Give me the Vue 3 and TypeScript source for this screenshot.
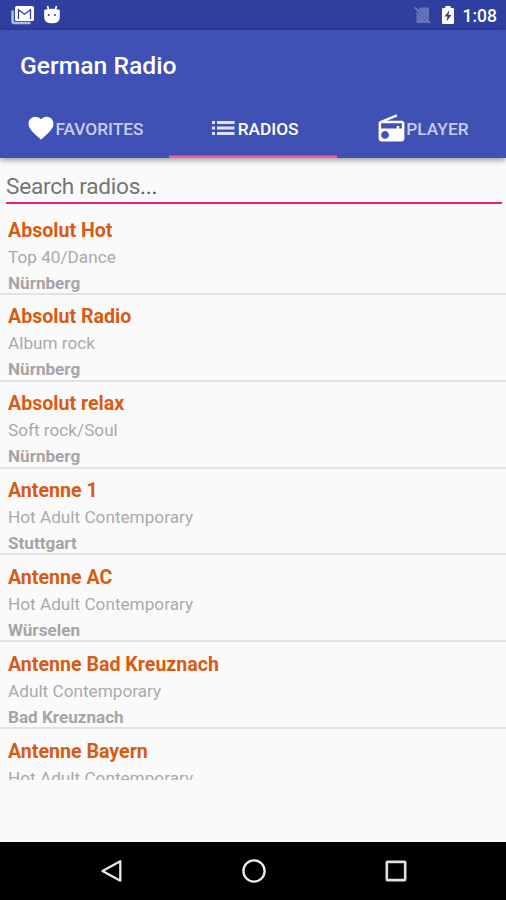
<script setup lang="ts">
interface Station {
  name: string
  genre: string
  city?: string
}

const stations: Station[] = [
  { name: 'Absolut Hot', genre: 'Top 40/Dance', city: 'Nürnberg' },
  { name: 'Absolut Radio', genre: 'Album rock', city: 'Nürnberg' },
  { name: 'Absolut relax', genre: 'Soft rock/Soul', city: 'Nürnberg' },
  { name: 'Antenne 1', genre: 'Hot Adult Contemporary', city: 'Stuttgart' },
  { name: 'Antenne AC', genre: 'Hot Adult Contemporary', city: 'Würselen' },
  { name: 'Antenne Bad Kreuznach', genre: 'Adult Contemporary', city: 'Bad Kreuznach' },
  { name: 'Antenne Bayern', genre: 'Hot Adult Contemporary' },
]
</script>

<template>
  <div class="screen">
    <div class="status">
      <svg class="mail" width="24" height="20" viewBox="0 0 24 20">
        <path d="M1.600 5.500v11q0 1.500 1.500 1.500H19.500" fill="none" stroke="#b4bae0" stroke-width="2.600" />
        <rect x="4" y="1" width="19" height="15" rx="1.500" fill="#fff" />
        <path d="M7.500 14V4.800l6 4.400 6-4.400V14" fill="none" stroke="#303f9f" stroke-width="1.300" />
      </svg>
      <svg class="droid" width="18" height="20" viewBox="0 0 18 20">
        <path d="M4.500 1l1.300 4M13.500 1l-1.300 4" stroke="#fff" stroke-width="1.600" />
        <path d="M1.200 5Q9 2.500 16.800 5V12q0 6.300-7.800 6.300T1.200 12Z" fill="#fff" />
        <circle cx="5.700" cy="10" r="1" fill="#303f9f" />
        <circle cx="12" cy="10" r="1" fill="#303f9f" />
      </svg>
      <span class="grow"></span>
      <svg class="nosim" width="18" height="18" viewBox="0 0 18 18">
        <path d="M6 1.500h9V17H2.500V5Z" fill="#6672b9" />
        <path d="M0 .8L16.500 17.300" stroke="#303f9f" stroke-width="2.600" />
        <path d="M.8 1.500L16 17" stroke="#8088c4" stroke-width="1.500" />
      </svg>
      <svg class="battery" width="14" height="20" viewBox="0 0 14 20">
        <path d="M4.300 1h5.400v2H12q1 0 1 1v14q0 1-1 1H2q-1 0-1-1V4q0-1 1-1h2.300Z" fill="#fff" />
        <path d="M8.500 5L3.500 11.500h3L5.500 16.500L10.500 10h-3Z" fill="#303f9f" />
      </svg>
      <span class="clock">1:08</span>
    </div>
    <header class="appbar">
      <h1>German Radio</h1>
      <nav class="tabs">
        <div class="tab fav">
          <svg width="30" height="30" viewBox="0 0 24 24"><path fill="#fff" d="M12 21.350l-1.450-1.320C5.400 15.360 2 12.280 2 8.500 2 5.420 4.420 3 7.500 3c1.740 0 3.410.81 4.500 2.090C13.090 3.810 14.760 3 16.500 3 19.580 3 22 5.420 22 8.500c0 3.780-3.400 6.860-8.550 11.540L12 21.350z" /></svg>
          <span>FAVORITES</span>
        </div>
        <div class="tab list active">
          <svg width="24" height="16" viewBox="0 0 24 16"><path fill="#dfe4fa" d="M1 1h3v3H1zM1 6.500h3v3H1zM1 12h3v3H1zM6 1h17.500v3H6zM6 6.500h17.500v3H6zM6 12h17.500v3H6z" /></svg>
          <span>RADIOS</span>
        </div>
        <div class="tab play">
          <svg width="31" height="31" viewBox="0 0 24 24"><path fill="#fff" d="M3.240 6.150C2.510 6.430 2 7.170 2 8v12c0 1.100.89 2 2 2h16c1.110 0 2-.9 2-2V8c0-1.110-.89-2-2-2H8.300l8.260-3.340L15.880 1 3.240 6.150zM7 20c-1.660 0-3-1.340-3-3s1.340-3 3-3 3 1.340 3 3-1.340 3-3 3zm13-8h-2v-2h-2v2H4V8h16v4z" /></svg>
          <span>PLAYER</span>
        </div>
      </nav>
    </header>
    <main>
      <div class="search"><span class="hint">Search radios<span class="dots">...</span></span></div>
      <ul class="stations">
        <li v-for="s in stations" :key="s.name">
          <div class="name">{{ s.name }}</div>
          <div class="genre">{{ s.genre }}</div>
          <div v-if="s.city" class="city">{{ s.city }}</div>
        </li>
      </ul>
    </main>
    <footer class="navbar">
      <svg width="24" height="26" viewBox="0 0 24 26"><path d="M21.300 3.300v19.400L3.500 13Z" fill="none" stroke="#e8e8e8" stroke-width="2.300" stroke-linejoin="round" /></svg>
      <svg width="26" height="26" viewBox="0 0 26 26"><circle cx="13" cy="13" r="10.600" fill="none" stroke="#eee" stroke-width="2.300" /></svg>
      <svg width="24" height="26" viewBox="0 0 24 26"><rect x="2.800" y="3.900" width="18.400" height="18.200" rx=".5" fill="none" stroke="#e0e0e0" stroke-width="2.600" /></svg>
    </footer>
  </div>
</template>

<style>
body {
  margin: 0;
  background: #fafafa;
}
</style>

<style scoped>
.screen {
  width: 506px;
  height: 900px;
  display: flex;
  flex-direction: column;
  overflow: hidden;
  background: #fafafa;
  font-family: Roboto, sans-serif;
}
svg {
  display: block;
  flex: none;
}
.status {
  height: 30px;
  flex: none;
  display: flex;
  align-items: center;
  box-sizing: border-box;
  padding: 0 9px 0 11px;
  background: #303f9f;
}
.droid {
  margin-left: 8px;
}
.grow {
  flex: 1;
}
.battery {
  margin: 0 8px 0 9px;
}
.clock {
  font-size: 17.500px;
  line-height: 30px;
  font-weight: 500;
  color: #fff;
  padding-top: 2px;
}
.appbar {
  height: 127.500px;
  flex: none;
  display: flex;
  flex-direction: column;
  background: #3f51b5;
  box-shadow: 0 2px 6px rgba(0, 0, 0, 0.4);
}
h1 {
  margin: 0;
  padding-left: 20px;
  height: 70px;
  font-size: 24.700px;
  line-height: 71px;
  font-weight: 500;
  color: #fff;
}
.tabs {
  flex: 1;
  display: grid;
  grid-template-columns: 1fr 1fr 1fr;
}
.tab {
  display: flex;
  align-items: center;
  box-sizing: border-box;
  padding-bottom: 1px;
  font-size: 17.300px;
  font-weight: 500;
  color: #c8cdec;
}
.tab span {
  line-height: 24px;
  padding-top: 2px;
}
.fav {
  padding-left: 25.500px;
}
.list {
  padding-left: 42px;
}
.list span {
  margin-left: 3px;
}
.play {
  padding-left: 39px;
}
.play svg {
  margin-right: -1px;
}
.active {
  color: #fff;
  box-shadow: inset 0 -2.500px #ff5a91;
}
main {
  height: 684.500px;
  display: flex;
  flex-direction: column;
}
.search {
  height: 44.500px;
  flex: none;
  margin: 0 4px 0 6px;
  border-bottom: 2px solid #ec1c7b;
  font-size: 22.600px;
  line-height: 58px;
  color: #757575;
}
.hint {
  letter-spacing: -0.250px;
}
.dots {
  color: #555;
}
.stations {
  list-style: none;
  margin: 4.100px 0 0;
  padding: 0;
  height: 571.500px;
  overflow: hidden;
}
li {
  height: 86.850px;
  box-sizing: border-box;
  padding: 8.500px 8px 0;
  border-bottom: 2px solid #e2e2e2;
}
.name {
  font-size: 19.600px;
  line-height: 27px;
  font-weight: 700;
  color: #d95b13;
}
.genre {
  font-size: 17.200px;
  line-height: 27px;
  color: #aaa;
}
.city {
  font-size: 17.100px;
  line-height: 25px;
  font-weight: 700;
  color: #a5a5a5;
}
.navbar {
  height: 58px;
  flex: none;
  display: flex;
  align-items: center;
  justify-content: space-between;
  box-sizing: border-box;
  padding: 0 98px 0 99px;
  background: #000;
}
</style>
